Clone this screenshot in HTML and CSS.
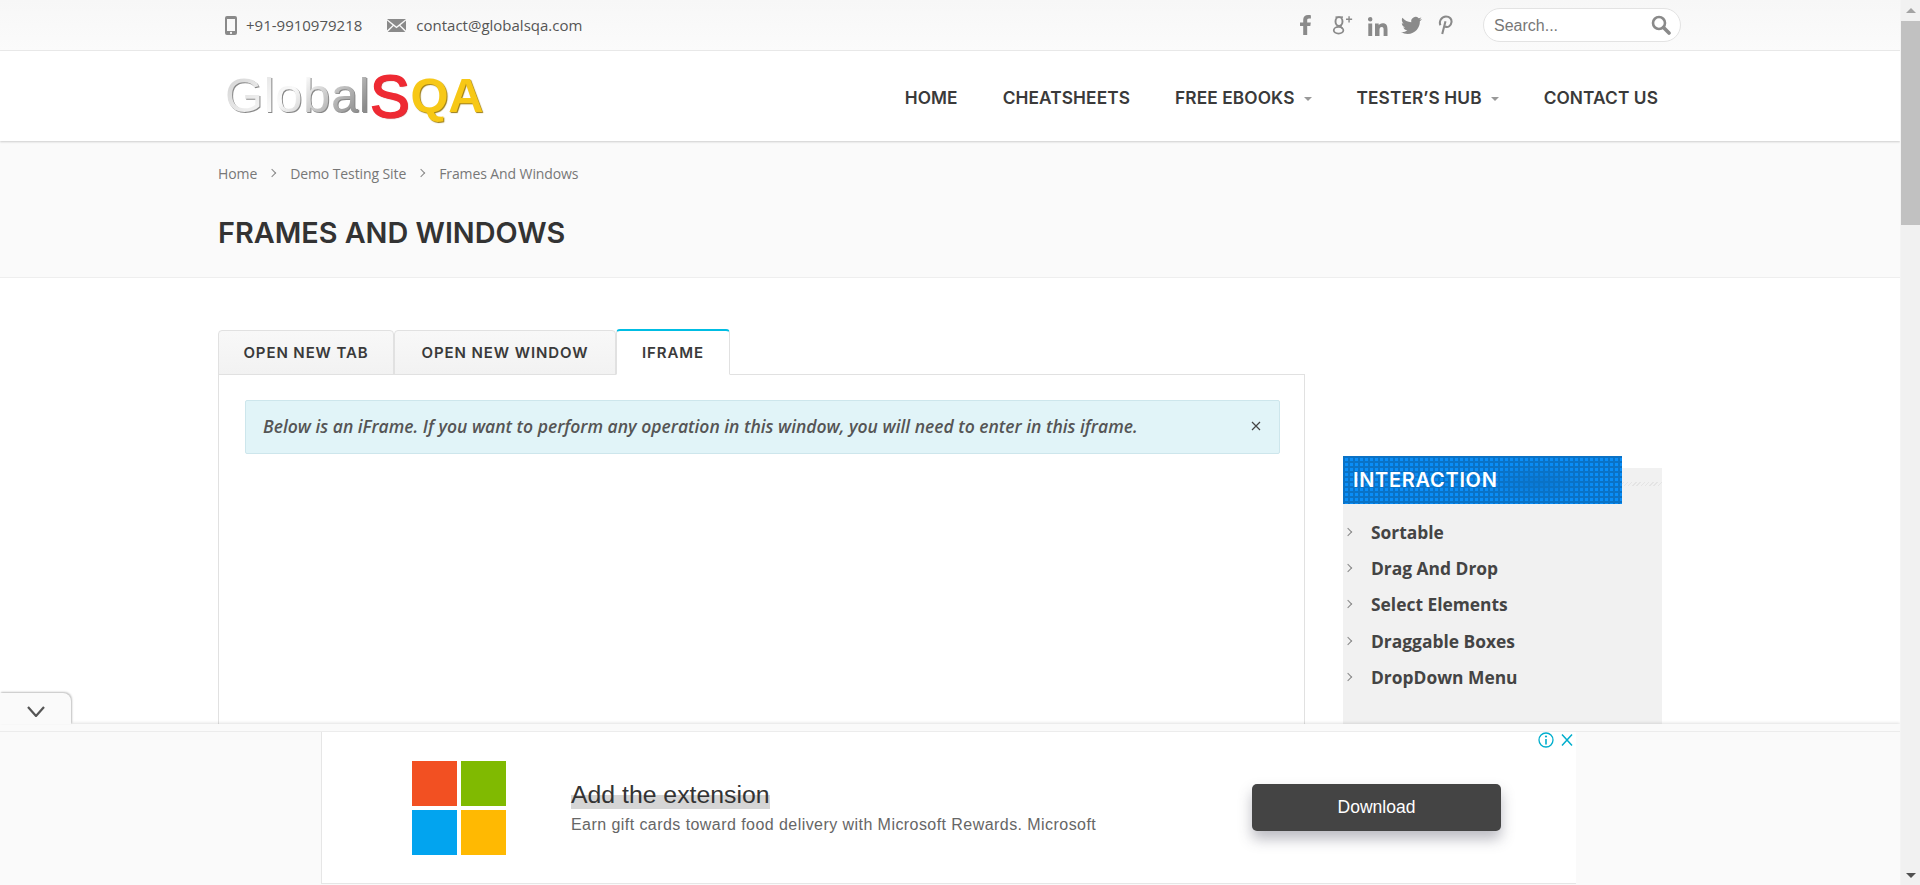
FILE: index.html
```html
<!DOCTYPE html>
<html lang="en">
<head>
    <meta charset="UTF-8">
    <meta name="viewport" content="width=device-width, initial-scale=1.0">
    <title>Frames And Windows - GlobalSQA</title>
    <link rel="stylesheet" href="styles.css">
</head>
<body>

<div class="page">
    <div class="top-bar">
        <div class="wrap top-inner">
            <div class="contact">
                <svg class="icon-phone" viewBox="0 0 12 19"><path fill="#8a8a8a" d="M2 0h8a2 2 0 0 1 2 2v15a2 2 0 0 1-2 2H2a2 2 0 0 1-2-2V2a2 2 0 0 1 2-2zm0 3v12h8V3zm4 12.8a1.1 1.1 0 1 0 0 2.2 1.1 1.1 0 0 0 0-2.2z"/></svg>
                <span class="contact-text">+91-9910979218</span>
                <svg class="icon-mail" viewBox="0 0 19 13"><path fill="#8a8a8a" d="M0 0h19L9.5 7.5zM0 1.6l5.6 4.6L0 11.6zM19 1.6v10l-5.6-5.4zM6.6 7l2.9 2.3L12.4 7l5.9 6H.7z"/></svg>
                <span class="contact-text">contact@globalsqa.com</span>
            </div>
            <div class="top-right">
                <div class="social">
                    <svg class="soc soc-f" viewBox="0 0 12 20"><path d="M3.2 20v-9H0V7.4h3.2V4.9C3.2 1.7 5.1 0 8 0c1.400 0 2.500.1 2.900.2v3.200H9c-1.500 0-1.800.7-1.800 1.800v2.200h3.600l-.5 3.600H7.200v9z"/></svg>
                    <svg class="soc soc-g" viewBox="0 0 24 22"><g fill="none" stroke="#8a8a8a"><ellipse cx="8" cy="7" rx="4" ry="5" stroke-width="2.200"/><ellipse cx="7.500" cy="17" rx="5.500" ry="3.800" stroke-width="2"/><path d="M11 11c-2 1.500-1 2.500 1 4" stroke-width="1.800"/><path d="M4 2h8.500" stroke-width="1.800"/><path d="M19.500 1v7M16 4.500h7" stroke-width="1.600"/></g></svg>
                    <svg class="soc soc-in" viewBox="0 0 20 19"><path d="M.3 6.500h3.900V19H.3zM2.200 0a2.200 2.200 0 1 1 0 4.500 2.200 2.200 0 0 1 0-4.500zM7 6.500h3.700v1.700c.6-1 1.900-2 3.900-2 4.100 0 4.900 2.700 4.900 6.200V19h-3.900v-5.800c0-1.400 0-3.200-1.900-3.200s-2.200 1.500-2.200 3.100V19H7z"/></svg>
                    <svg class="soc soc-tw" viewBox="0 0 24 24"><path d="M23.953 4.570a10 10 0 0 1-2.825.775 4.958 4.958 0 0 0 2.163-2.723c-.951.555-2.005.959-3.127 1.184a4.920 4.920 0 0 0-8.384 4.482C7.690 8.095 4.067 6.130 1.640 3.162a4.822 4.822 0 0 0-.666 2.475c0 1.710.870 3.213 2.188 4.096a4.904 4.904 0 0 1-2.228-.616v.060a4.923 4.923 0 0 0 3.946 4.827 4.996 4.996 0 0 1-2.212.085 4.936 4.936 0 0 0 4.604 3.417 9.867 9.867 0 0 1-6.102 2.105c-.390 0-.779-.023-1.170-.067a13.995 13.995 0 0 0 7.557 2.209c9.053 0 13.998-7.496 13.998-13.985 0-.210 0-.420-.015-.630A9.935 9.935 0 0 0 24 4.590z"/></svg>
                    <svg class="soc soc-pin" viewBox="0 0 16 21"><path d="M4.500 20L8 6.500M2.600 10.800C.8 7 3.500 1.500 8.500 1.500c4.200 0 6.300 2.800 5.900 6-.4 3.800-3.900 6.200-6.700 4.600" fill="none" stroke="#8a8a8a" stroke-width="2.200"/></svg>
                </div>
                <div class="search">
                    <span class="search-text">Search...</span>
                    <svg class="icon-search" viewBox="0 0 20 20"><circle cx="8" cy="8" r="6" fill="none" stroke="#8a8a8a" stroke-width="2.600"/><path d="M12.500 12.500L18 18" stroke="#8a8a8a" stroke-width="3.600" stroke-linecap="round"/></svg>
                </div>
            </div>
        </div>
    </div>

    <header class="site-header">
        <div class="wrap header-inner">
            <div class="logo"><span class="logo-global">Global</span><span class="logo-s">S</span><span class="logo-qa">QA</span></div>
            <nav class="main-nav">
                <a>HOME</a>
                <a>CHEATSHEETS</a>
                <a class="has-sub">FREE EBOOKS</a>
                <a class="has-sub">TESTER’S HUB</a>
                <a>CONTACT US</a>
            </nav>
        </div>
    </header>

    <div class="title-area">
        <div class="wrap">
            <div class="breadcrumb">
                <span>Home</span><i class="crumb-sep"></i><span>Demo Testing Site</span><i class="crumb-sep"></i><span>Frames And Windows</span>
            </div>
            <h1>FRAMES AND WINDOWS</h1>
        </div>
    </div>

    <div class="wrap content">
        <main class="main-col">
            <div class="tabs">
                <div class="tab tab-one">OPEN NEW TAB</div>
                <div class="tab tab-two">OPEN NEW WINDOW</div>
                <div class="tab active">IFRAME</div>
            </div>
            <div class="tab-panel">
                <div class="alert">
                    <em>Below is an iFrame. If you want to perform any operation in this window, you will need to enter in this iframe.</em>
                    <svg class="alert-close" viewBox="0 0 10 10"><path d="M1 1l8 8M9 1l-8 8" stroke="#444" stroke-width="1.200"/></svg>
                </div>
            </div>
        </main>
        <aside class="sidebar">
            <div class="side-title"><span>INTERACTION</span></div>
            <ul class="side-list">
                <li>Sortable</li>
                <li>Drag And Drop</li>
                <li>Select Elements</li>
                <li>Draggable Boxes</li>
                <li>DropDown Menu</li>
            </ul>
        </aside>
    </div>

    <!-- sticky ad at the bottom -->
    <div class="ad-bar">
        <div class="ad-toggle">
            <svg viewBox="0 0 18 11"><path d="M1 1l8 9 8-9" fill="none" stroke="#555" stroke-width="2.200"/></svg>
        </div>
        <div class="ad-box">
            <div class="ms-logo"><b class="ms-red"></b><b class="ms-green"></b><b class="ms-blue"></b><b class="ms-yellow"></b></div>
            <div class="ad-copy">
                <div class="ad-title">Add the extension</div>
                <div class="ad-sub">Earn gift cards toward food delivery with Microsoft Rewards. Microsoft</div>
            </div>
            <div class="ad-button">Download</div>
            <div class="ad-marks">
                <svg viewBox="0 0 16 16" class="ad-info"><circle cx="8" cy="8" r="7" fill="none" stroke="#00aecd" stroke-width="1.300"/><path d="M8 7v5.500" stroke="#00aecd" stroke-width="1.600"/><circle cx="8" cy="4.500" r="1.100" fill="#00aecd"/></svg>
                <svg viewBox="0 0 14 14" class="ad-x"><path d="M2 1.500l10 11M12 1.500l-10 11" stroke="#00aecd" stroke-width="1.500"/></svg>
            </div>
        </div>
    </div>
</div>

<div class="scrollbar">
    <div class="sb-up"></div>
    <div class="sb-thumb"></div>
    <div class="sb-down"></div>
</div>

</body>
</html>
```
FILE: styles.css
```css
html, body {
    margin: 0;
    padding: 0;
    height: 885px;
    overflow: hidden;
}
body {
    display: flex;
    font-family: "Open Sans", Arial, sans-serif;
    color: #444;
    background-color: #fff;
}
.page {
    position: relative;
    flex: 1;
    height: 885px;
    overflow: hidden;
}
.wrap {
    margin-left: 218px;
    width: 1463px;
}

/* Top bar */
.top-bar {
    height: 50px;
    border-bottom: 1px solid #ebebeb;
    background: linear-gradient(#f7f7f7, #fbfbfb);
}
.top-inner {
    display: flex;
    justify-content: space-between;
    align-items: center;
    height: 50px;
}
.contact {
    display: flex;
    align-items: center;
    margin-left: 7px;
    font-size: 15px;
}
.contact-text {
    color: #555;
}
.icon-phone {
    width: 12px;
    height: 19px;
    margin-right: 9px;
}
.icon-mail {
    width: 19px;
    height: 13px;
    margin-left: 25px;
    margin-right: 10px;
}
.top-right {
    display: flex;
    align-items: center;
}
.social {
    display: flex;
    align-items: center;
    margin-right: 30px;
}
.soc {
    fill: #8a8a8a;
    display: block;
}
.soc-f { width: 12px; height: 20px; }
.soc-g { width: 21px; height: 20px; margin-left: 20px; }
.soc-in { width: 20px; height: 19px; margin-left: 15px; margin-top: 2px; }
.soc-tw { width: 21px; height: 21px; margin-left: 13px; }
.soc-pin { width: 15px; height: 20px; margin-left: 16px; }
.search {
    display: flex;
    justify-content: space-between;
    align-items: center;
    box-sizing: border-box;
    width: 198px;
    height: 34px;
    padding: 0 9px 0 10px;
    background-color: #fff;
    border: 1px solid #e3e3e3;
    border-radius: 17px;
    font-family: "Liberation Sans", Arial, sans-serif;
    font-size: 16px;
    color: #777;
}
.search-text {
    margin-top: 2px;
}
.icon-search {
    width: 20px;
    height: 20px;
}

/* Header */
.site-header {
    height: 90px;
    background-color: #fff;
    box-shadow: 0 1px 2px rgba(0, 0, 0, 0.18);
    position: relative;
}
.header-inner {
    display: flex;
    justify-content: space-between;
    align-items: center;
    height: 90px;
}
.logo {
    margin-left: 7px;
    font-family: "Liberation Sans", Arial, sans-serif;
    font-size: 49px;
    line-height: 60px;
    white-space: nowrap;
    margin-top: -2px;
}
.logo-global {
    color: transparent;
    letter-spacing: 0.6px;
    background: linear-gradient(135deg, #d8d8d8 10%, #fafafa 45%, #8c8c8c 90%);
    -webkit-background-clip: text;
    background-clip: text;
    filter: drop-shadow(1px 1px 0 #888);
}
.logo-s {
    display: inline-block;
    vertical-align: -5px;
    color: #ee2a33;
    font-size: 59px;
    line-height: 50px;
    -webkit-text-stroke: 2px #ee2a33;
    text-shadow: 1px 1px 1px #a81c20;
}
.logo-qa {
    color: #f7c816;
    font-weight: bold;
    font-size: 49px;
    letter-spacing: -0.5px;
    margin-left: 1px;
    text-shadow: 1px 1px 1px #9a7a10;
}
.main-nav {
    display: flex;
    margin-right: 23px;
    margin-top: 3px;
    font-family: "Inter", Arial, sans-serif;
    font-weight: 600;
    font-size: 17.3px;
    letter-spacing: 0.1px;
    color: #3a3a3a;
}
.main-nav a {
    margin-left: 45px;
}
.main-nav .has-sub {
    position: relative;
    margin-right: 17px;
}
.main-nav .has-sub::after {
    content: "";
    position: absolute;
    right: -17px;
    top: 10px;
    border-left: 4px solid transparent;
    border-right: 4px solid transparent;
    border-top: 4px solid #999;
}

/* Title area */
.title-area {
    height: 137px;
    box-sizing: border-box;
    border-bottom: 1px solid #eee;
    background-color: #fafafa;
    padding-top: 22px;
}
.breadcrumb {
    display: flex;
    align-items: center;
    height: 20px;
    font-size: 14px;
    letter-spacing: -0.1px;
    color: #777;
}
.crumb-sep {
    width: 5px;
    height: 5px;
    margin: 0 15px 0 12px;
    border-top: 1px solid #888;
    border-right: 1px solid #888;
    transform: rotate(45deg);
}
.title-area h1 {
    margin: 32px 0 0;
    font-family: "Inter", Arial, sans-serif;
    font-weight: 600;
    font-size: 28.8px;
    line-height: 36px;
    color: #333;
}

/* Content */
.content {
    display: flex;
    gap: 38px;
    padding-top: 52px;
}
.main-col {
    width: 1087px;
}
.tabs {
    display: flex;
    align-items: flex-end;
    height: 45px;
    position: relative;
    z-index: 1;
    margin-bottom: -1px;
}
.tab {
    box-sizing: border-box;
    height: 45px;
    line-height: 44px;
    text-align: center;
    font-family: "Inter", Arial, sans-serif;
    font-weight: 600;
    font-size: 15px;
    letter-spacing: 0.9px;
    color: #3a3a3a;
    border: 1px solid #e1e1e1;
    border-bottom: 1px solid #e1e1e1;
    border-radius: 4px 4px 0 0;
    background: linear-gradient(#f8f8f8, #f2f2f2);
}
.tab-one {
    width: 176px;
}
.tab-two {
    width: 222px;
}
.tab.active {
    width: 114px;
    height: 46px;
    background: #fff;
    border-top: 2px solid #00bde3;
    border-bottom-color: #fff;
}
.tab-panel {
    box-sizing: border-box;
    height: 520px;
    border: 1px solid #e1e1e1;
    padding: 25px 24px 25px 26px;
}
.alert {
    display: flex;
    justify-content: space-between;
    align-items: center;
    box-sizing: border-box;
    height: 54px;
    padding: 0 18px 2px 17px;
    background-color: #e1f4f8;
    border: 1px solid #cde6ec;
    border-radius: 2px;
    font-size: 17.5px;
    font-weight: 600;
    color: #555;
}
.alert-close {
    width: 10px;
    height: 10px;
}

/* Sidebar */
.sidebar {
    width: 319px;
    height: 320px;
    margin-top: 138px;
    background-color: #f1f1f1;
    background-image: repeating-linear-gradient(135deg, #e4e4e4 0, #e4e4e4 1px, transparent 1px, transparent 3px);
    background-size: 100% 4px;
    background-position: 0 14px;
    background-repeat: no-repeat;
}
.side-title {
    box-sizing: border-box;
    width: 279px;
    height: 48px;
    margin-top: -12px;
    padding-left: 10px;
    line-height: 48px;
    font-family: "Inter", Arial, sans-serif;
    font-weight: 600;
    font-size: 20px;
    letter-spacing: 0.7px;
    color: #fff;
    background-color: #0a8ef8;
    background-image:
        linear-gradient(90deg, #0a72c6 2px, transparent 2px),
        linear-gradient(#0a72c6 2px, transparent 2px),
        radial-gradient(ellipse 60px 20px at 70% 55%, rgba(8, 70, 130, 0.3), transparent);
    background-size: 5px 5px, 5px 5px, 100% 100%;
}
.side-list {
    list-style: none;
    margin: 10px 0 0;
    padding: 0;
    font-size: 17.4px;
    font-weight: 700;
    color: #444;
}
.side-list li {
    position: relative;
    height: 36.2px;
    line-height: 36px;
    padding-left: 28px;
}
.side-list li::before {
    content: "";
    position: absolute;
    left: 2px;
    top: 15px;
    width: 5px;
    height: 5px;
    border-top: 1.500px solid #888;
    border-right: 1.500px solid #888;
    transform: rotate(45deg);
}

/* Ad bar */
.ad-bar {
    position: absolute;
    left: 0;
    right: 0;
    bottom: 0;
    height: 161px;
    box-sizing: border-box;
    padding-top: 7px;
    background-color: #fafafa;
    box-shadow: 0 -1px 3px rgba(0, 0, 0, 0.12);
}
.ad-toggle {
    position: absolute;
    left: 0;
    top: -31px;
    width: 71px;
    height: 31px;
    display: flex;
    align-items: center;
    justify-content: center;
    background-color: #fafafa;
    border-radius: 0 8px 0 0;
    box-shadow: 1px -1px 2px rgba(0, 0, 0, 0.25);
}
.ad-toggle svg {
    width: 18px;
    height: 11px;
    margin-top: 5px;
}
.ad-box {
    position: relative;
    display: flex;
    align-items: center;
    box-sizing: border-box;
    height: 154px;
    padding-left: 412px;
    background:
        linear-gradient(#fff, #fff) 322px 0 / 1254px 151px no-repeat,
        linear-gradient(#e6e6e6, #e6e6e6) 321px 0 / 1255px 152px no-repeat;
    border-top: 1px solid #ececec;
    font-family: "Liberation Sans", Arial, sans-serif;
}
.ms-logo {
    display: grid;
    flex: none;
    grid-template-columns: 45px 45px;
    grid-template-rows: 45px 45px;
    gap: 4px;
    margin-top: -1px;
}
.ms-logo b {
    display: block;
}
.ms-red { background-color: #f25022; }
.ms-green { background-color: #80ba01; }
.ms-blue { background-color: #02a4ef; }
.ms-yellow { background-color: #ffb902; }
.ad-copy {
    margin-left: 65px;
    margin-top: -2px;
    width: 681px;
    flex: none;
}
.ad-title {
    display: inline-block;
    font-size: 24.8px;
    line-height: 28px;
    color: #333;
    background: linear-gradient(transparent 50%, #d5d5d5 50%);
}
.ad-sub {
    margin-top: 6px;
    font-size: 16px;
    line-height: 20px;
    letter-spacing: 0.44px;
    color: #666;
}
.ad-button {
    flex: none;
    width: 249px;
    height: 47px;
    margin-top: -2px;
    line-height: 47px;
    text-align: center;
    font-size: 17.5px;
    color: #fff;
    background-color: #444;
    border-radius: 5px;
    box-shadow: 0 8px 14px rgba(60, 60, 80, 0.35);
}
.ad-marks {
    position: absolute;
    top: 0;
    left: 1538px;
    display: flex;
    align-items: center;
    gap: 6px;
}
.ad-info {
    width: 16px;
    height: 16px;
}
.ad-x {
    width: 14px;
    height: 14px;
}

/* Scrollbar drawn as part of the page */
.scrollbar {
    position: relative;
    flex: 0 0 19px;
    height: 885px;
    background-color: #f1f1f1;
    border-left: 1px solid #f4f4f4;
}
.sb-thumb {
    position: absolute;
    top: 21px;
    left: 0;
    right: 0;
    height: 204px;
    background-color: #c1c1c1;
}
.sb-up, .sb-down {
    position: absolute;
    left: 5px;
    border-left: 5px solid transparent;
    border-right: 5px solid transparent;
}
.sb-up {
    top: 8px;
    border-bottom: 5px solid #a3a3a3;
}
.sb-down {
    bottom: 7px;
    border-top: 5px solid #505050;
}
```
